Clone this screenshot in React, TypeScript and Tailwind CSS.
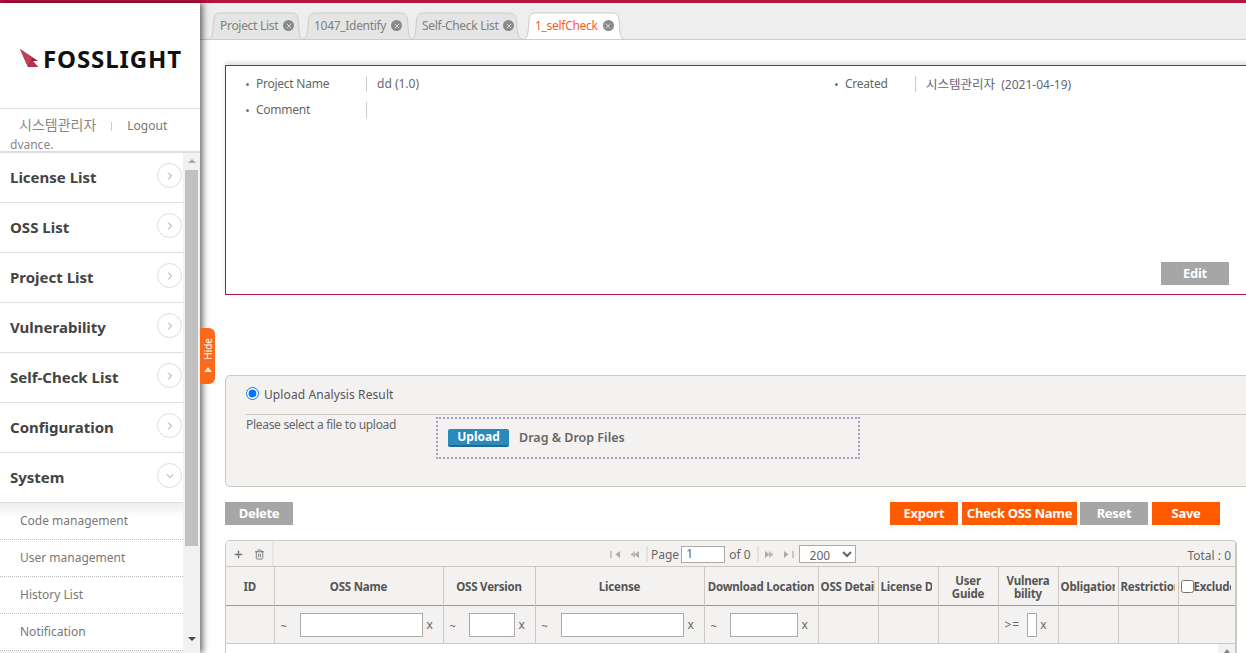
import { ChevronDown, ChevronRight, Plus, Trash2, X } from 'lucide-react';
import type { ReactNode } from 'react';

const menus = ['License List', 'OSS List', 'Project List', 'Vulnerability', 'Self-Check List', 'Configuration', 'System'];
const subMenus = ['Code management', 'User management', 'History List', 'Notification'];

const tabs = [
  { label: 'Project List', width: 'w-[90px] mr-[4px]', active: false },
  { label: '1047_Identify', width: 'w-[106px] mr-[2px]', active: false },
  { label: 'Self-Check List', width: 'w-[107px] mr-[6px]', active: false },
  { label: '1_selfCheck', width: 'w-[96px]', active: true },
];

const columns = [
  { label: 'ID', width: 'w-[48px]', inner: 'block' },
  { label: 'OSS Name', width: 'w-[169px]', inner: 'block' },
  { label: 'OSS Version', width: 'w-[92px]', inner: 'block' },
  { label: 'License', width: 'w-[169px]', inner: 'block' },
  { label: 'Download Location', width: 'w-[114px]', inner: 'block whitespace-nowrap' },
  { label: 'OSS Detail', width: 'w-[60px]', inner: 'block w-[54px] overflow-hidden whitespace-nowrap text-left' },
  { label: 'License Detail', width: 'w-[60px]', inner: 'block w-[51px] overflow-hidden whitespace-nowrap text-left' },
  { label: 'User Guide', width: 'w-[60px]', inner: 'block' },
  { label: 'Vulnera bility', width: 'w-[60px]', inner: 'block' },
  { label: 'Obligation', width: 'w-[60px]', inner: 'block w-[54px] overflow-hidden whitespace-nowrap text-left' },
  { label: 'Restriction', width: 'w-[60px]', inner: 'block w-[54px] overflow-hidden whitespace-nowrap text-left' },
];

function Logo() {
  return (
    <div className="flex items-center gap-[5px]">
      <svg width="18" height="19" viewBox="0 0 18 19" className="shrink-0">
        <path d="M0 0 L18 12 L13 12 L18 18 L8 18 Z" fill="#a3162f" />
        <path d="M0 0 L12 9 L8 18 Z" fill="#c2405a" />
        <path d="M8 18 L12 11 L18 18 Z" fill="#b8304a" />
      </svg>
      <span className="text-[24px] leading-none font-bold tracking-[0.9px] text-[#111]">FOSSLIGHT</span>
    </div>
  );
}

function Sidebar() {
  return (
    <aside className="relative z-10 flex h-full w-[200px] shrink-0 flex-col bg-white shadow-[3px_0_6px_rgba(0,0,0,0.55)]">
      <div className="flex h-[106px] shrink-0 items-center border-b border-[#ddd] pt-[6px] pl-5">
        <Logo />
      </div>
      <div className="h-[44px] shrink-0 overflow-hidden border-b-2 border-[#ddd] pl-[10px]">
        <div className="flex h-[23px] items-end text-[12px] leading-none text-[#777]">
          <span className="ml-[9px] text-[14px] text-[#888]">시스템관리자</span>
          <span className="mx-[15px] mb-[1px] h-[9px] w-px bg-[#ccc]" />
          <span>Logout</span>
        </div>
        <div className="mt-[7px] text-[12px] leading-[12px] text-[#888]">dvance.</div>
      </div>
      <div className="flex min-h-0 flex-1">
        <div className="w-[183px] shrink-0 bg-[#f0f0f0]">
          {menus.map((name) => (
            <div key={name} className="flex h-[50px] items-start justify-between border-b border-[#ddd] bg-white pt-[10px] pl-[10px]">
              <span className="mt-[3px] text-[15px] leading-[22px] font-bold text-[#444]">{name}</span>
              <span className="mr-px flex h-[25px] w-[25px] items-center justify-center rounded-full border border-[#ddd] bg-white text-[#333]">
                {name === 'System' ? <ChevronDown size={12} strokeWidth={1} /> : <ChevronRight size={12} strokeWidth={1} />}
              </span>
            </div>
          ))}
          <div className="bg-white bg-gradient-to-b from-[#eee] to-white to-[14px]">
            {subMenus.map((name) => (
              <div key={name} className="flex h-[37px] items-center border-b border-dotted border-[#bbb] pl-5 text-[12px] text-[#777]">
                {name}
              </div>
            ))}
          </div>
        </div>
        <div className="flex h-full w-[17px] shrink-0 flex-col items-center bg-[#f1f1f1] px-[2px]">
          <span className="mt-[6px] h-0 w-0 border-x-[4px] border-b-[4px] border-x-transparent border-b-[#aaa]" />
          <span className="mt-[7px] h-[376px] w-[13px] shrink-0 bg-[#c1c1c1]" />
          <span className="mt-[91px] h-0 w-0 border-x-[4px] border-t-[4px] border-x-transparent border-t-[#444]" />
        </div>
      </div>
      <span className="absolute top-[325px] left-[200px] flex h-[56px] w-[15px] flex-col items-center gap-[7px] rounded-r-[6px] bg-[#f96a1b] pt-[10px] text-white">
        <span className="rotate-180 text-[10px] leading-none [writing-mode:vertical-rl]">Hide</span>
        <span className="h-0 w-0 border-x-[4px] border-b-[5px] border-x-transparent border-b-[#ffe6d8]" />
      </span>
    </aside>
  );
}

function Tab({ label, width, active }: { label: string; width: string; active: boolean }) {
  return (
    <div className={`relative flex h-[27px] shrink-0 items-center pl-[8px] ${width} ${active ? 'z-10' : ''}`}>
      <svg className="absolute inset-y-0 -left-[2px] h-full w-[calc(100%+4px)]" viewBox="0 0 100 27" preserveAspectRatio="none">
        <path
          d="M0 27 C4 26 4 22 5 8 C5.5 3 7 1 12 1 L88 1 C93 1 94.5 3 95 8 C96 22 96 26 100 27"
          fill={active ? '#fff' : '#e5e5e5'}
          stroke="#cccccc"
          vectorEffect="non-scaling-stroke"
        />
      </svg>
      <span className={`relative ml-[1px] text-[12px] leading-none tracking-[-0.3px] whitespace-nowrap ${active ? 'text-[#fb5a2a]' : 'text-[#808080]'}`}>{label}</span>
      <span className="relative ml-[5px] flex h-[11px] w-[11px] items-center justify-center rounded-full bg-[#8a8a8a] text-white">
        <X size={8} strokeWidth={2} />
      </span>
    </div>
  );
}

function InfoRow({ label, children, labelWidth }: { label: string; children?: ReactNode; labelWidth: string }) {
  return (
    <div className="flex h-[26px] items-center text-[12px] text-[#666]">
      <span className="mr-[7px] ml-px h-[3px] w-[3px] rounded-full bg-[#777]" />
      <span className={`${labelWidth} leading-none tracking-[-0.25px]`}>{label}</span>
      <span className="h-[16px] w-px bg-[#ccc]" />
      <span className="ml-[10px] text-[#667]">{children}</span>
    </div>
  );
}

function ActionButton({ label, color, width }: { label: string; color: string; width: string }) {
  return (
    <button className={`flex h-[23px] items-center justify-center text-[13px] font-bold tracking-[-0.3px] text-white ${color} ${width}`}>{label}</button>
  );
}

function FilterInput({ width }: { width: string }) {
  return (
    <div className="flex items-center pt-px text-[12px] text-[#666]">
      <span className="mt-[3px] w-[25px] pl-[6px] text-[11px]">~</span>
      <input className={`h-[24px] border border-[#aaa] bg-white ${width}`} />
      <span className="ml-[4px]">x</span>
    </div>
  );
}

function PagerIcon({ flip, bar }: { flip?: boolean; bar?: boolean }) {
  return (
    <svg width="11" height="7" viewBox="0 0 11 7" className={flip ? 'rotate-180' : ''}>
      {bar ? <path d="M1 0v7" stroke="#aaa" strokeWidth="1.2" /> : <path d="M6 0 L1.5 3.5 L6 7Z" fill="#bbb" />}
      <path d="M10 0 L5.5 3.5 L10 7Z" fill="#aaa" />
    </svg>
  );
}

function Grid() {
  return (
    <div className="w-[1012px] overflow-hidden rounded-t-[5px] border border-r-2 border-[#ccc9c0] bg-white">
      <div className="flex h-[25px] items-center bg-[#f3f2f1] pt-px text-[12px] text-[#666]">
        <div className="flex h-full w-[48px] items-center gap-[10px] border-r-2 border-[#e8e6e2] pl-[7px]">
          <Plus size={11} strokeWidth={3} className="text-[#777]" />
          <Trash2 size={11} className="text-[#777]" />
        </div>
        <div className="ml-[336px] flex items-center gap-[8px]">
          <PagerIcon bar />
          <PagerIcon />
        </div>
        <span className="mr-[3px] ml-[6px] h-[16px] w-[2px] bg-[#e4e2de]" />
        <span className="mt-px">Page</span>
        <input defaultValue="1" className="mr-[4px] ml-[2px] h-[17px] w-[44px] border border-[#aaa] bg-white pl-[4px] text-[12px]" />
        <span className="mt-px">of 0</span>
        <span className="mr-[5px] ml-[6px] h-[16px] w-[2px] bg-[#e4e2de]" />
        <div className="flex items-center gap-[8px]">
          <PagerIcon flip />
          <PagerIcon flip bar />
        </div>
        <select className="ml-[5px] h-[18px] w-[57px] border border-[#aaa] bg-white pl-[6px] text-[12px] text-[#666]">
          <option>200</option>
        </select>
        <span className="mt-[3px] mr-[4px] ml-auto">Total : 0</span>
      </div>
      <table className="w-full table-fixed border-collapse text-[12px]">
        <thead>
          <tr className="h-[39px] border-y border-y-[#ccc9c0] border-b-[#999] bg-[#f3f2f1]">
            {columns.map((col) => (
              <th key={col.label} className={`${col.width} overflow-hidden border-r border-[#ccc9c0] px-[2px] pt-px text-center text-[11.5px] leading-[13px] font-bold tracking-[-0.2px] text-[#555]`}>
                <span className={col.inner}>
                  {col.label === 'Vulnera bility' ? (
                    <>
                      Vulnera
                      <br />
                      bility
                    </>
                  ) : (
                    col.label
                  )}
                </span>
              </th>
            ))}
            <th className="overflow-hidden px-[2px] pt-px text-[11.5px] font-bold tracking-[-0.2px] text-[#555]">
              <span className="flex w-[50px] items-center overflow-hidden whitespace-nowrap">
                <input type="checkbox" className="h-[13px] w-[13px] shrink-0" readOnly />
                Exclude
              </span>
            </th>
          </tr>
        </thead>
        <tbody>
          <tr className="h-[38px] border-b border-[#ccc9c0] bg-[#f3f2f1]">
            <td className="border-r border-[#ccc9c0]" />
            <td className="border-r border-[#ccc9c0]"><FilterInput width="w-[123px]" /></td>
            <td className="border-r border-[#ccc9c0]"><FilterInput width="w-[46px]" /></td>
            <td className="border-r border-[#ccc9c0]"><FilterInput width="w-[123px]" /></td>
            <td className="border-r border-[#ccc9c0]"><FilterInput width="w-[68px]" /></td>
            <td className="border-r border-[#ccc9c0]" />
            <td className="border-r border-[#ccc9c0]" />
            <td className="border-r border-[#ccc9c0]" />
            <td className="border-r border-[#ccc9c0]">
              <div className="flex items-center pt-px pl-[6px] text-[12px] text-[#666]">
                <span className="mr-[7px] tracking-[1px]">&gt;=</span>
                <input className="h-[24px] w-[10px] border border-[#aaa] bg-white" />
                <span className="ml-[3px]">x</span>
              </div>
            </td>
            <td className="border-r border-[#ccc9c0]" />
            <td className="border-r border-[#ccc9c0]" />
            <td />
          </tr>
        </tbody>
      </table>
      <div className="flex h-[12px] justify-end">
        <span className="flex h-full w-[17px] justify-center bg-[#f1f1f1] pt-[5px]">
          <span className="h-0 w-0 border-x-[3px] border-b-[4px] border-x-transparent border-b-[#888]" />
        </span>
      </div>
    </div>
  );
}

export default function App() {
  return (
    <div className="flex h-[653px] w-[1246px] flex-col overflow-hidden bg-white font-['Noto_Sans','Noto_Sans_CJK_KR',sans-serif]">
      <div className="h-[3px] shrink-0 bg-[#b8123f]" />
      <div className="flex min-h-0 flex-1">
        <Sidebar />
        <main className="min-w-0 flex-1 overflow-hidden">
          <div className="flex h-[37px] items-end border-b border-[#ccc] bg-[#eeeeee] pl-[11px]">
            {tabs.map((tab) => (
              <Tab key={tab.label} {...tab} />
            ))}
          </div>
          <div className="ml-[25px] w-[1040px]">
            <section className="mt-[25px] flex h-[230px] flex-col border border-[#b8123f] pt-[5px] pl-[19px] shadow-[0_-3px_4px_rgba(0,0,0,0.12)]">
              <div className="flex">
                <div className="w-[589px]">
                  <InfoRow label="Project Name" labelWidth="w-[110px]">dd (1.0)</InfoRow>
                  <InfoRow label="Comment" labelWidth="w-[110px]" />
                </div>
                <InfoRow label="Created" labelWidth="w-[70px]">
                  <span className="relative top-px text-[12.5px]">
                    시스템관리자 <span className="ml-[3px] text-[12px]">(2021-04-19)</span>
                  </span>
                </InfoRow>
              </div>
              <button className="mt-auto mb-[9px] ml-[916px] flex h-[23px] w-[68px] items-center justify-center bg-[#a6a6a6] text-[13px] font-bold tracking-[-0.3px] text-white">Edit</button>
            </section>
            <section className="mt-[80px] h-[112px] rounded-l-[5px] border border-[#ccc9c0] bg-[#f3f2f1] pl-5">
              <label className="mr-[17px] flex h-[39px] items-center border-b border-[#ccc9c0] text-[12px] text-[#555]">
                <input type="radio" defaultChecked className="m-0 mb-[4px] h-[13px] w-[13px]" />
                <span className="ml-[5px] tracking-[0.1px]">Upload Analysis Result</span>
              </label>
              <div className="flex items-start">
                <span className="mt-[1px] w-[190px] text-[12px] tracking-[-0.3px] text-[#666]">Please select a file to upload</span>
                <div className="mt-[2px] flex h-[42px] w-[424px] items-center border-2 border-dotted border-[#a39dc8] pl-[10px]">
                  <span className="flex h-[18px] w-[61px] items-center justify-center rounded-[2px] border-b-2 border-[#1c6a97] bg-[#2b89bb] text-[12px] font-bold text-white">Upload</span>
                  <span className="ml-[10px] text-[12.5px] font-semibold text-[#666]">Drag &amp; Drop Files</span>
                </div>
              </div>
            </section>
            <div className="mt-[15px] flex">
              <ActionButton label="Delete" color="bg-[#a6a6a6]" width="w-[68px]" />
              <ActionButton label="Export" color="ml-[597px] bg-[#ff5a00]" width="w-[68px]" />
              <ActionButton label="Check OSS Name" color="ml-[4px] bg-[#ff5a00]" width="w-[115px]" />
              <ActionButton label="Reset" color="ml-[3px] bg-[#a6a6a6]" width="w-[68px]" />
              <ActionButton label="Save" color="ml-[4px] bg-[#ff5a00]" width="w-[68px]" />
            </div>
            <div className="mt-[15px]">
              <Grid />
            </div>
          </div>
        </main>
      </div>
    </div>
  );
}
